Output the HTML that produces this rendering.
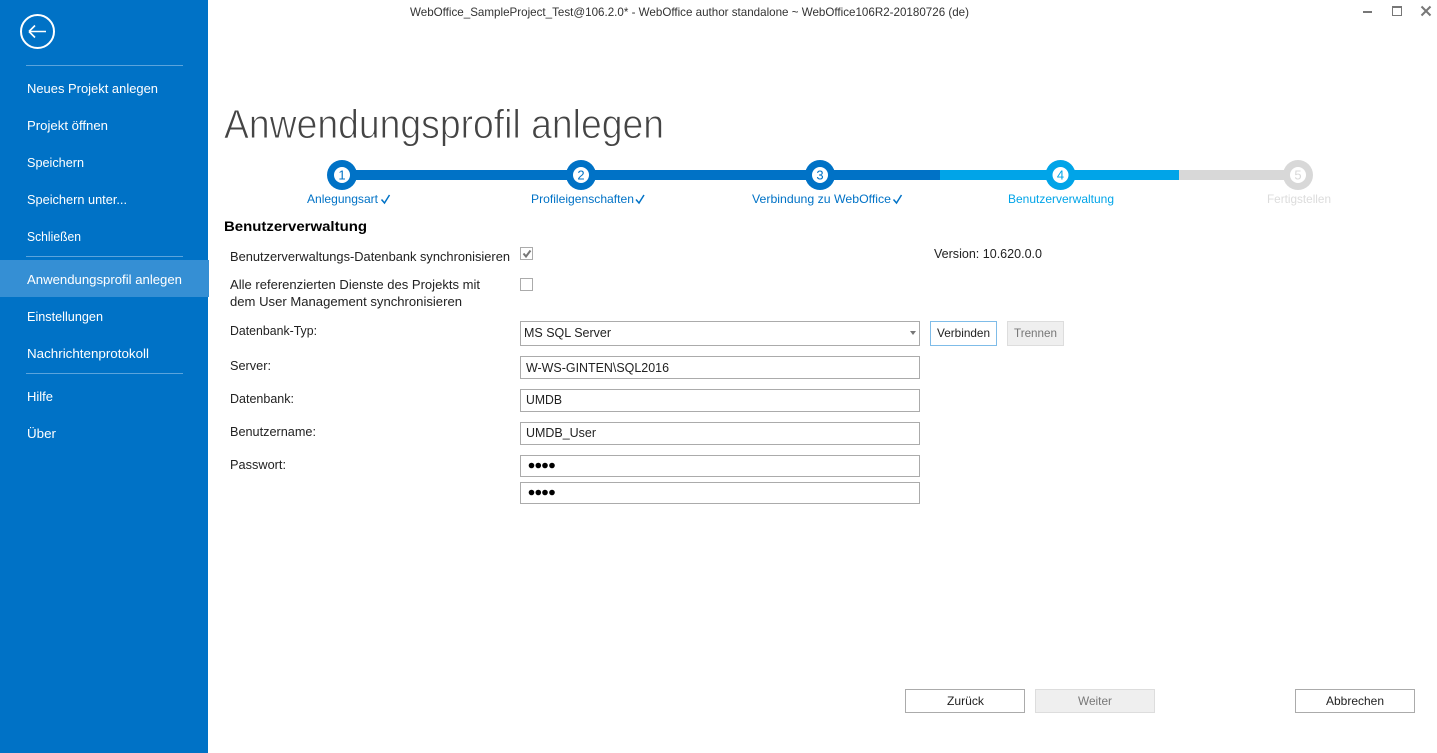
<!DOCTYPE html>
<html lang="de"><head><meta charset="utf-8"><title>Anwendungsprofil anlegen</title>
<style>
html,body{margin:0;padding:0;background:#fff;width:1437px;height:753px;overflow:hidden}
svg{display:block}
text{font-family:"Liberation Sans",sans-serif;font-size:13px;fill:#222;white-space:pre}
.n text{fill:#fff}
.s{fill:#0072c6}
.f{fill:#fff;stroke:#ababab;stroke-width:1}
.num{font-size:13px;text-anchor:middle}
</style></head><body>
<svg width="1437" height="753" viewBox="0 0 1437 753" xmlns="http://www.w3.org/2000/svg">
<rect x="0" y="0" width="208" height="753" fill="#0072c6"/>
<rect x="0" y="260" width="209" height="37" fill="#358fd4"/>
<circle cx="37.5" cy="31.5" r="16.5" fill="none" stroke="#fff" stroke-width="2"/>
<path d="M29 31.500H46M29 31.500L35 25.500M29 31.500L35 37.500" fill="none" stroke="#fff" stroke-width="1.600"/>
<g fill="#5ba4dc"><rect x="26" y="65" width="157" height="1"/><rect x="26" y="256" width="157" height="1"/><rect x="26" y="373" width="157" height="1"/></g>
<g class="n">
<text x="27" y="93" textLength="131" lengthAdjust="spacingAndGlyphs">Neues Projekt anlegen</text>
<text x="27" y="130" textLength="81" lengthAdjust="spacingAndGlyphs">Projekt öffnen</text>
<text x="27" y="167" textLength="57" lengthAdjust="spacingAndGlyphs">Speichern</text>
<text x="27" y="204" textLength="100" lengthAdjust="spacingAndGlyphs">Speichern unter...</text>
<text x="27" y="241" textLength="54" lengthAdjust="spacingAndGlyphs">Schließen</text>
<text x="27" y="284" textLength="155" lengthAdjust="spacingAndGlyphs">Anwendungsprofil anlegen</text>
<text x="27" y="321" textLength="76" lengthAdjust="spacingAndGlyphs">Einstellungen</text>
<text x="27" y="358" textLength="122" lengthAdjust="spacingAndGlyphs">Nachrichtenprotokoll</text>
<text x="27" y="401" textLength="26" lengthAdjust="spacingAndGlyphs">Hilfe</text>
<text x="27" y="438" textLength="29" lengthAdjust="spacingAndGlyphs">Über</text>
</g>
<text x="410" y="16" textLength="559" lengthAdjust="spacingAndGlyphs" style="font-size:12px;fill:#333">WebOffice_SampleProject_Test@106.2.0* - WebOffice author standalone ~ WebOffice106R2-20180726 (de)</text>
<rect x="1363" y="11" width="9" height="2" fill="#777"/>
<rect x="1392.500" y="6.500" width="9" height="9" fill="none" stroke="#777"/><rect x="1392" y="6" width="10" height="2" fill="#777"/>
<path d="M1421.500 6.500L1430.500 15.500M1430.500 6.500L1421.500 15.500" stroke="#777" stroke-width="2" fill="none"/>
<text x="224" y="138" textLength="440" lengthAdjust="spacingAndGlyphs" style="font-size:41px;fill:#444;stroke:#fff;stroke-width:.9px">Anwendungsprofil anlegen</text>
<rect x="342" y="170" width="598" height="10" class="s"/>
<rect x="940" y="170" width="239" height="10" fill="#00a4e8"/>
<rect x="1179" y="170" width="119" height="10" fill="#d8d8d8"/>
<circle cx="342" cy="175" r="15" class="s"/><circle cx="342" cy="175" r="8" fill="#fff"/><text x="342" y="179.500" class="num" style="fill:#0072c6">1</text>
<circle cx="581" cy="175" r="15" class="s"/><circle cx="581" cy="175" r="8" fill="#fff"/><text x="581" y="179.500" class="num" style="fill:#0072c6">2</text>
<circle cx="820" cy="175" r="15" class="s"/><circle cx="820" cy="175" r="8" fill="#fff"/><text x="820" y="179.500" class="num" style="fill:#0072c6">3</text>
<circle cx="1060.500" cy="175" r="15" fill="#00a4e8"/><circle cx="1060.500" cy="175" r="8" fill="#fff"/><text x="1060.500" y="179.500" class="num" style="fill:#00a4e8">4</text>
<circle cx="1298" cy="175" r="15" fill="#d8d8d8"/><circle cx="1298" cy="175" r="8" fill="#fff"/><text x="1298" y="179.500" class="num" style="fill:#d8d8d8">5</text>
<text x="307" y="203" textLength="71" lengthAdjust="spacingAndGlyphs" style="font-size:12px;fill:#0072c6">Anlegungsart</text>
<text x="531" y="203" textLength="103" lengthAdjust="spacingAndGlyphs" style="font-size:12px;fill:#0072c6">Profileigenschaften</text>
<text x="752" y="203" textLength="139" lengthAdjust="spacingAndGlyphs" style="font-size:12px;fill:#0072c6">Verbindung zu WebOffice</text>
<text x="1008" y="203" textLength="106" lengthAdjust="spacingAndGlyphs" style="font-size:12px;fill:#00a4e8">Benutzerverwaltung</text>
<text x="1267" y="203" textLength="64" lengthAdjust="spacingAndGlyphs" style="font-size:12px;fill:#dcdcdc">Fertigstellen</text>
<g fill="none" stroke="#0072c6" stroke-width="1.500">
<path d="M381.500 199.500L384.500 203L389.500 195"/><path d="M636 199.500L639 203L644 195"/><path d="M893.500 199.500L896.500 203L901.500 195"/>
</g>
<text x="224" y="231" textLength="143" lengthAdjust="spacingAndGlyphs" style="font-size:14px;font-weight:bold;fill:#000">Benutzerverwaltung</text>
<text x="230" y="261" textLength="280" lengthAdjust="spacingAndGlyphs">Benutzerverwaltungs-Datenbank synchronisieren</text>
<text x="230" y="289" textLength="250" lengthAdjust="spacingAndGlyphs">Alle referenzierten Dienste des Projekts mit</text>
<text x="230" y="306" textLength="232" lengthAdjust="spacingAndGlyphs">dem User Management synchronisieren</text>
<text x="230" y="335" textLength="87" lengthAdjust="spacingAndGlyphs">Datenbank-Typ:</text>
<text x="230" y="370" textLength="41" lengthAdjust="spacingAndGlyphs">Server:</text>
<text x="230" y="403" textLength="64" lengthAdjust="spacingAndGlyphs">Datenbank:</text>
<text x="230" y="436" textLength="86" lengthAdjust="spacingAndGlyphs">Benutzername:</text>
<text x="230" y="469" textLength="56" lengthAdjust="spacingAndGlyphs">Passwort:</text>
<text x="934" y="258" textLength="108" lengthAdjust="spacingAndGlyphs">Version: 10.620.0.0</text>
<rect x="520.500" y="247.500" width="12" height="12" class="f"/>
<path d="M523.500 253.500L526 256.500L530.500 250.500" fill="none" stroke="#777" stroke-width="2"/>
<rect x="520.500" y="278.500" width="12" height="12" class="f"/>
<rect x="520.500" y="321.500" width="399" height="24" class="f"/>
<text x="524" y="337" textLength="87" lengthAdjust="spacingAndGlyphs">MS SQL Server</text>
<path d="M910 331H916L913 335Z" fill="#777"/>
<rect x="930.500" y="321.500" width="66" height="24" fill="#fff" stroke="#7fbce8"/>
<text x="937" y="337" textLength="53" lengthAdjust="spacingAndGlyphs" style="font-size:12px">Verbinden</text>
<rect x="1007.500" y="321.500" width="56" height="24" fill="#efefef" stroke="#dddddd"/>
<text x="1014" y="337" textLength="43" lengthAdjust="spacingAndGlyphs" style="font-size:12px;fill:#777">Trennen</text>
<rect x="520.500" y="356.500" width="399" height="22" class="f"/>
<text x="526" y="372" textLength="143" lengthAdjust="spacingAndGlyphs">W-WS-GINTEN\SQL2016</text>
<rect x="520.500" y="389.500" width="399" height="22" class="f"/>
<text x="526" y="404" textLength="36" lengthAdjust="spacingAndGlyphs">UMDB</text>
<rect x="520.500" y="422.500" width="399" height="22" class="f"/>
<text x="526" y="437" textLength="70" lengthAdjust="spacingAndGlyphs">UMDB_User</text>
<rect x="520.500" y="455.500" width="399" height="21" class="f"/>
<rect x="520.500" y="482.500" width="399" height="21" class="f"/>
<g fill="#000">
<circle cx="531.500" cy="465.500" r="2.800"/><circle cx="538.300" cy="465.500" r="2.800"/><circle cx="545" cy="465.500" r="2.800"/><circle cx="552" cy="465.500" r="2.800"/>
<circle cx="531.500" cy="492.500" r="2.800"/><circle cx="538.300" cy="492.500" r="2.800"/><circle cx="545" cy="492.500" r="2.800"/><circle cx="552" cy="492.500" r="2.800"/>
</g>
<rect x="905.500" y="689.500" width="119" height="23" class="f"/>
<text x="947" y="705" textLength="37" lengthAdjust="spacingAndGlyphs" style="font-size:12px">Zurück</text>
<rect x="1035.500" y="689.500" width="119" height="23" fill="#efefef" stroke="#dddddd"/>
<text x="1078" y="705" textLength="34" lengthAdjust="spacingAndGlyphs" style="font-size:12px;fill:#777">Weiter</text>
<rect x="1295.500" y="689.500" width="119" height="23" class="f"/>
<text x="1326" y="705" textLength="58" lengthAdjust="spacingAndGlyphs" style="font-size:12px">Abbrechen</text>
</svg>
</body></html>
